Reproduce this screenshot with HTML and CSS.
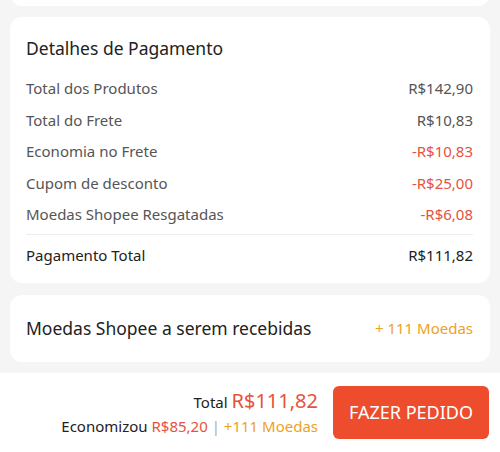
FILE: index.html
```html
<!DOCTYPE html>
<html lang="pt-BR">

<head>
	<meta charset="UTF-8">
	<meta name="viewport" content="width=device-width, initial-scale=1.0">
	<title>Pagamento</title>
	<link rel="stylesheet" href="styles.css">
</head>

<body>
	<div class="page">
		<div class="card prev"></div>

		<div class="card details">
			<h2 class="title">Detalhes de Pagamento</h2>
			<ul class="rows">
				<li><span>Total dos Produtos</span><span>R$142,90</span></li>
				<li><span>Total do Frete</span><span>R$10,83</span></li>
				<li class="minus"><span>Economia no Frete</span><span>-R$10,83</span></li>
				<li class="minus"><span>Cupom de desconto</span><span>-R$25,00</span></li>
				<li class="minus"><span>Moedas Shopee Resgatadas</span><span>-R$6,08</span></li>
			</ul>
			<div class="total-row"><span>Pagamento Total</span><span>R$111,82</span></div>
		</div>

		<div class="card coins">
			<span>Moedas Shopee a serem recebidas</span>
			<span class="coin">+ 111 Moedas</span>
		</div>
	</div>

	<div class="bar">
		<div class="sum">
			<div class="sum-total">Total <span class="price">R$111,82</span></div>
			<div class="sum-save">Economizou <span class="red">R$85,20</span> <span class="sep">|</span> <span class="coin">+111 Moedas</span></div>
		</div>
		<button class="order">FAZER PEDIDO</button>
	</div>
</body>

</html>
```

FILE: styles.css
```css
* {
	padding: 0;
	margin: 0;
	list-style: none;
	border: 0;
	box-sizing: border-box;
}

body {
	width: 500px;
	height: 452px;
	overflow: hidden;
	background: #f5f5f5;
	font-family: "Noto Sans", "Open Sans", sans-serif;
	color: #222;
}

.page {
	padding: 0 10px;
}

.card {
	background: #fff;
	border-radius: 12px;
}

.prev {
	height: 30px;
	margin-top: -24px;
}

.details {
	margin-top: 11px;
	padding: 18px 17px 8px 16px;
}

.title {
	font-size: 17.5px;
	font-weight: normal;
	line-height: 26px;
	margin-bottom: 12px;
}

.rows li {
	display: flex;
	justify-content: space-between;
	height: 31.5px;
	line-height: 31.5px;
	font-size: 15px;
	color: #555;
}

.rows li.minus span:last-child {
	color: #e5533d;
}

.total-row {
	display: flex;
	justify-content: space-between;
	margin-top: 3px;
	border-top: 1px solid #eee;
	line-height: 40px;
	font-size: 15px;
	color: #222;
}

.coins {
	margin-top: 12px;
	height: 67px;
	padding: 0 17px 0 16px;
	display: flex;
	align-items: center;
	justify-content: space-between;
	font-size: 17.5px;
}

.coins .coin {
	font-size: 15px;
}

.coin {
	color: #eda21c;
}

.red {
	color: #e5533d;
}

.bar {
	margin-top: 11px;
	height: 79px;
	background: #fff;
	display: flex;
	align-items: center;
	justify-content: flex-end;
	padding: 0 11px 0 0;
	gap: 15px;
}

.sum {
	text-align: right;
}

.sum-total {
	font-size: 15px;
	line-height: 26px;
}

.sum-total .price {
	font-size: 20px;
	color: #e5533d;
}

.sum-save {
	font-size: 15px;
	line-height: 22px;
}

.sep {
	color: #aaa;
}

.order {
	width: 156px;
	height: 53px;
	border-radius: 6px;
	background: #ee4d2d;
	color: #fff;
	font-family: inherit;
	font-size: 18px;
}
```
